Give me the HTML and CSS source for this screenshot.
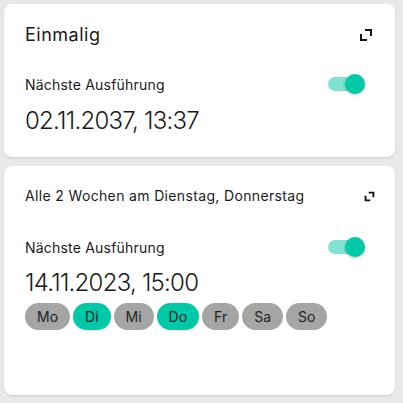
FILE: index.html
```html
<!DOCTYPE html>
<html lang="de">
<head>
  <meta charset="UTF-8">
  <meta name="viewport" content="width=device-width, initial-scale=1.0">
  <title>Zeitpläne</title>
  <link rel="stylesheet" href="styles.css">
</head>
<body>
  <main class="list">
    <section class="card card-once">
      <div class="card-head">
        <h2 class="title title-big">Einmalig</h2>
        <svg class="expand expand-big" viewBox="0 0 14 14">
          <path d="M6 2H12V8M2 6V12H8" fill="none" stroke="#111" stroke-width="2"/>
        </svg>
      </div>
      <div class="next-row">
        <span class="label">Nächste Ausführung</span>
        <div class="switch"><span class="track"></span><span class="thumb"></span></div>
      </div>
      <div class="date">02.11.2037, 13:37</div>
    </section>

    <section class="card card-repeat">
      <div class="card-head">
        <h2 class="title">Alle 2 Wochen am Dienstag, Donnerstag</h2>
        <svg class="expand expand-small" viewBox="0 0 14 14">
          <path d="M6 2H12V8M2 6V12H8" fill="none" stroke="#111" stroke-width="2.4"/>
        </svg>
      </div>
      <div class="next-row">
        <span class="label">Nächste Ausführung</span>
        <div class="switch"><span class="track"></span><span class="thumb"></span></div>
      </div>
      <div class="date">14.11.2023, 15:00</div>
      <div class="days">
        <span class="day">Mo</span>
        <span class="day on">Di</span>
        <span class="day">Mi</span>
        <span class="day on">Do</span>
        <span class="day">Fr</span>
        <span class="day">Sa</span>
        <span class="day">So</span>
      </div>
    </section>
  </main>
</body>
</html>
```

FILE: styles.css
```css
body {
  margin: 0;
  font-family: Inter, 'Noto Sans', sans-serif;
  background: #e8e8e8;
  color: #1a1a1a;
}
.list {
  padding: 4px 8px 4px 4px;
  display: flex;
  flex-direction: column;
  gap: 9px;
}
.card {
  background: #fff;
  border-radius: 8px;
  box-shadow: 0 1px 2px rgba(0, 0, 0, 0.12);
  padding: 20px 20px 0 21px;
  box-sizing: border-box;
}
.card-once {
  height: 153px;
}
.card-repeat {
  height: 229px;
}
.card-head {
  display: flex;
  align-items: center;
  justify-content: space-between;
}
.title {
  margin: 0;
  font-size: 14px;
  font-weight: 400;
  line-height: 20px;
  letter-spacing: 0.35px;
}
.title-big {
  font-size: 18px;
  line-height: 22px;
  letter-spacing: 0.5px;
}
.expand-big {
  width: 14px;
  height: 14px;
  margin-right: 2px;
}
.expand-small {
  width: 11px;
  height: 11px;
  margin-right: 0;
}
.next-row {
  display: flex;
  align-items: center;
  justify-content: space-between;
  margin-top: 28px;
}
.card-repeat .next-row {
  margin-top: 31px;
}
.label {
  font-size: 14px;
  letter-spacing: 0.2px;
}
.switch {
  position: relative;
  width: 37px;
  height: 20px;
  margin-right: 10px;
}
.track {
  position: absolute;
  left: 0;
  top: 3px;
  width: 34px;
  height: 14px;
  border-radius: 7px;
  background: #80e2d1;
}
.thumb {
  position: absolute;
  right: 0;
  top: 0;
  width: 20px;
  height: 20px;
  border-radius: 50%;
  background: #00c9a7;
  box-shadow: 0 1px 3px rgba(0, 0, 0, 0.25);
}
.date {
  margin-top: 12px;
  font-size: 24px;
  font-weight: 300;
  line-height: 30px;
  letter-spacing: -0.75px;
}
.card-repeat .date {
  margin-top: 11px;
}
.days {
  display: flex;
  gap: 3px;
  margin-top: 5px;
}
.day {
  height: 27px;
  line-height: 27px;
  padding: 0 12px;
  border-radius: 14px;
  background: #a5a5a5;
  font-size: 14px;
  color: #222;
}
.day.on {
  background: #00c9a7;
}
```
